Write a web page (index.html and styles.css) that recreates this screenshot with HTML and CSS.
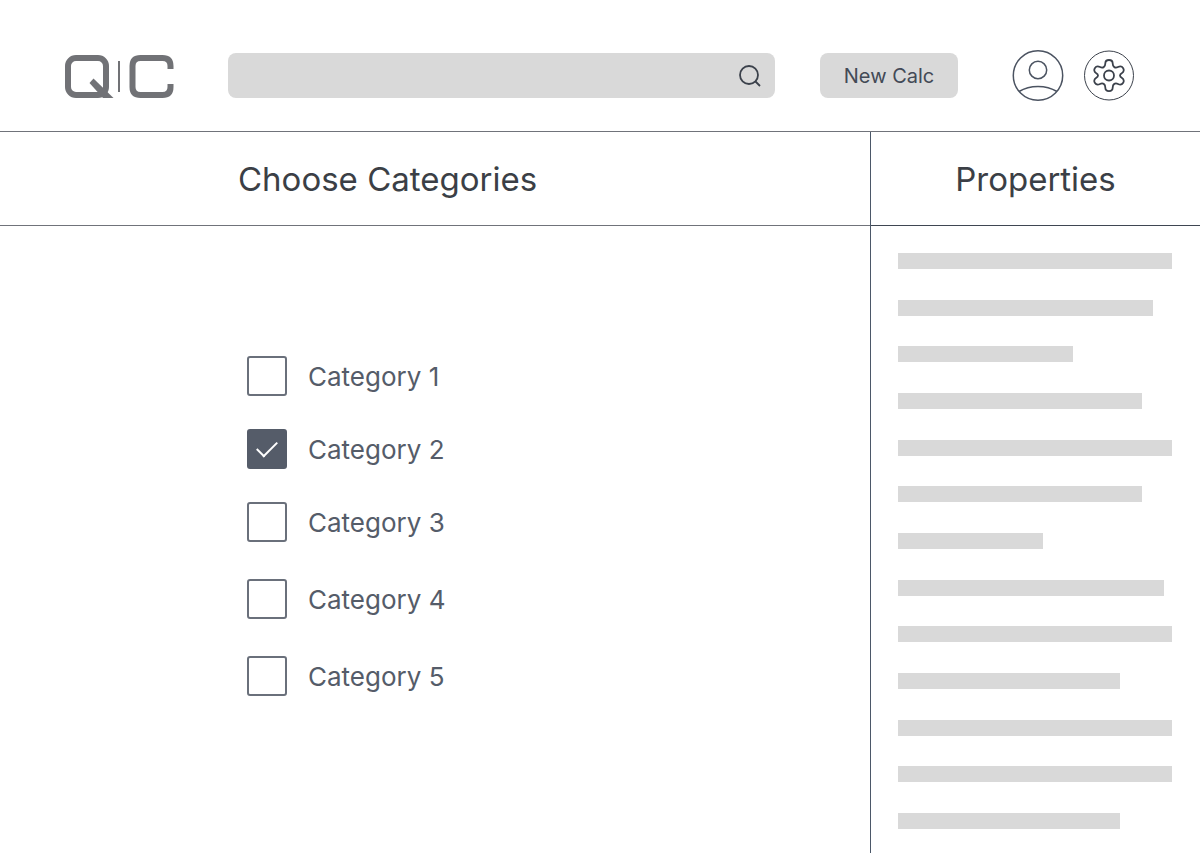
FILE: index.html
```html
<!DOCTYPE html>
<html lang="en">
<head>
    <meta charset="UTF-8">
    <meta name="viewport" content="width=device-width, initial-scale=1.0">
    <title>QC - Choose Categories</title>
    <link rel="stylesheet" href="styles.css">
</head>
<body>

<header class="header">
    <a href="#" class="logo" aria-label="QC">
        <svg width="109" height="45" viewBox="0 0 109 45" fill="none" stroke="#717276">
            <rect x="3" y="5" width="38" height="37" rx="8" stroke-width="6"/>
            <path d="M28.500 25.500 L48.500 45 H38 L24.500 30 Z" fill="#717276" stroke="none"/>
            <path d="M54 8 V39" stroke-width="2"/>
            <path d="M105.500 16 V13 Q105.500 5 97.500 5 H75.500 Q67.500 5 67.500 13 V34 Q67.500 42 75.500 42 H97.500 Q105.500 42 105.500 34 V31" stroke-width="6"/>
        </svg>
    </a>

    <form class="search" role="search">
        <input type="search" class="search-input" aria-label="Search">
        <button type="submit" class="search-button" aria-label="Search">
            <svg width="24" height="24" viewBox="0 0 24 24" fill="none" stroke="#3b414b" stroke-width="1.8">
                <circle cx="11" cy="11" r="9"/>
                <path d="M17 17 L22 22"/>
            </svg>
        </button>
    </form>

    <button type="button" class="new-calc">New Calc</button>

    <div class="actions">
        <button type="button" class="icon-button" aria-label="Account">
            <svg width="52" height="51" viewBox="0 0 52 51" fill="none" stroke="#4b5361" stroke-width="1.500">
                <circle cx="26" cy="25.500" r="24.700"/>
                <circle cx="26" cy="20" r="8.700"/>
                <path d="M7 41.500 C18 34.800 34 34.800 45 41.500"/>
            </svg>
        </button>
        <button type="button" class="icon-button" aria-label="Settings">
            <svg width="50" height="51" viewBox="0 0 50 51" fill="none" stroke="#3b414b" stroke-width="1.800">
                <circle cx="25" cy="25.500" r="24.500" stroke-width="1"/>
                <circle cx="25" cy="25.500" r="5"/>
                <path d="M21.300 13.500 C21.300 8.800 28.700 8.800 28.700 13.500 C28.700 17 31.200 18.500 34 17 C38.500 14.600 42 20.500 38 23 C35.300 24.600 35.300 26.400 38 28 C42 30.500 38.500 36.400 34 34 C31.200 32.500 28.700 34 28.700 37.500 C28.700 42.200 21.300 42.200 21.300 37.500 C21.300 34 18.800 32.500 16 34 C11.500 36.400 8 30.500 12 28 C14.700 26.400 14.700 24.600 12 23 C8 20.500 11.500 14.600 16 17 C18.800 18.500 21.300 17 21.300 13.500 Z"/>
            </svg>
        </button>
    </div>
</header>

<div class="content">
    <main class="categories">
        <h1 class="title">Choose Categories</h1>
        <form class="category-list">
            <label class="category"><input type="checkbox"> Category 1</label>
            <label class="category"><input type="checkbox" checked> Category 2</label>
            <label class="category"><input type="checkbox"> Category 3</label>
            <label class="category"><input type="checkbox"> Category 4</label>
            <label class="category"><input type="checkbox"> Category 5</label>
        </form>
    </main>

    <aside class="properties">
        <h2 class="title">Properties</h2>
        <div class="lines">
            <div class="line" style="width: 100%"></div>
            <div class="line" style="width: 93%"></div>
            <div class="line" style="width: 64%"></div>
            <div class="line" style="width: 89%"></div>
            <div class="line" style="width: 100%"></div>
            <div class="line" style="width: 89%"></div>
            <div class="line" style="width: 53%"></div>
            <div class="line" style="width: 97%"></div>
            <div class="line" style="width: 100%"></div>
            <div class="line" style="width: 81%"></div>
            <div class="line" style="width: 100%"></div>
            <div class="line" style="width: 100%"></div>
            <div class="line" style="width: 81%"></div>
        </div>
    </aside>
</div>

</body>
</html>
```
FILE: styles.css
```css
* { box-sizing: border-box; }
body { margin: 0; min-height: 100vh; display: flex; flex-direction: column; background-color: #fff; color: #3b3f46; font-family: Inter, sans-serif; }
button { border: none; padding: 0; background: none; color: inherit; font-family: inherit; cursor: pointer; }
svg { display: block; }

/* Header */
.header { display: flex; align-items: center; padding: 50px 66px 30px 65px; border-bottom: 1px solid #70737a; }
.logo { margin-right: 54px; }
.search { flex: 1; display: flex; align-items: center; height: 45px; margin-right: 45px; padding-right: 13px; background-color: #d9d9d9; border-radius: 8px; }
.search-input { flex: 1; min-width: 0; height: 100%; padding: 0 16px; border: none; outline: none; background: none; font-family: inherit; font-size: 20px; }
.new-calc { width: 138px; height: 45px; margin-right: 54px; background-color: #d9d9d9; border-radius: 8px; color: #434a56; font-size: 20px; }
.actions { display: flex; gap: 20px; }

/* Columns */
.content { flex: 1; display: flex; }
.categories { flex: 1; }
.properties { width: 330px; display: flex; flex-direction: column; border-left: 1px solid #4b5768; }
.title { margin: 0; height: 94px; line-height: 94px; border-bottom: 1px solid #70737a; font-size: 33px; font-weight: 400; }
.categories .title { padding-left: 238px; }
.properties .title { text-align: center; border-color: #3f4652; }

/* Categories */
.category-list { display: flex; flex-direction: column; align-items: flex-start; padding: 130px 0 0 247px; }
.category { display: flex; align-items: center; gap: 21px; height: 40px; margin-bottom: 33px; color: #555c69; font-size: 26px; cursor: pointer; }
.category:nth-child(n+3) { margin-bottom: 37px; }
.category input { appearance: none; display: grid; place-items: center; width: 40px; height: 40px; margin: 0; border: 2px solid #6a707b; border-radius: 3px; background-color: #fff; }
.category input:checked { background-color: #555c69; border-color: #555c69; }
.category input:checked::before { content: ""; width: 18px; height: 9px; margin-bottom: 6px; border: solid #fff; border-width: 0 0 2px 2px; transform: rotate(-45deg); }

/* Properties */
.lines { flex: 1; display: flex; flex-direction: column; justify-content: space-between; gap: 16px; padding: 27px 28px 24px 27px; }
.line { height: 16px; background-color: #d9d9d9; }
```
